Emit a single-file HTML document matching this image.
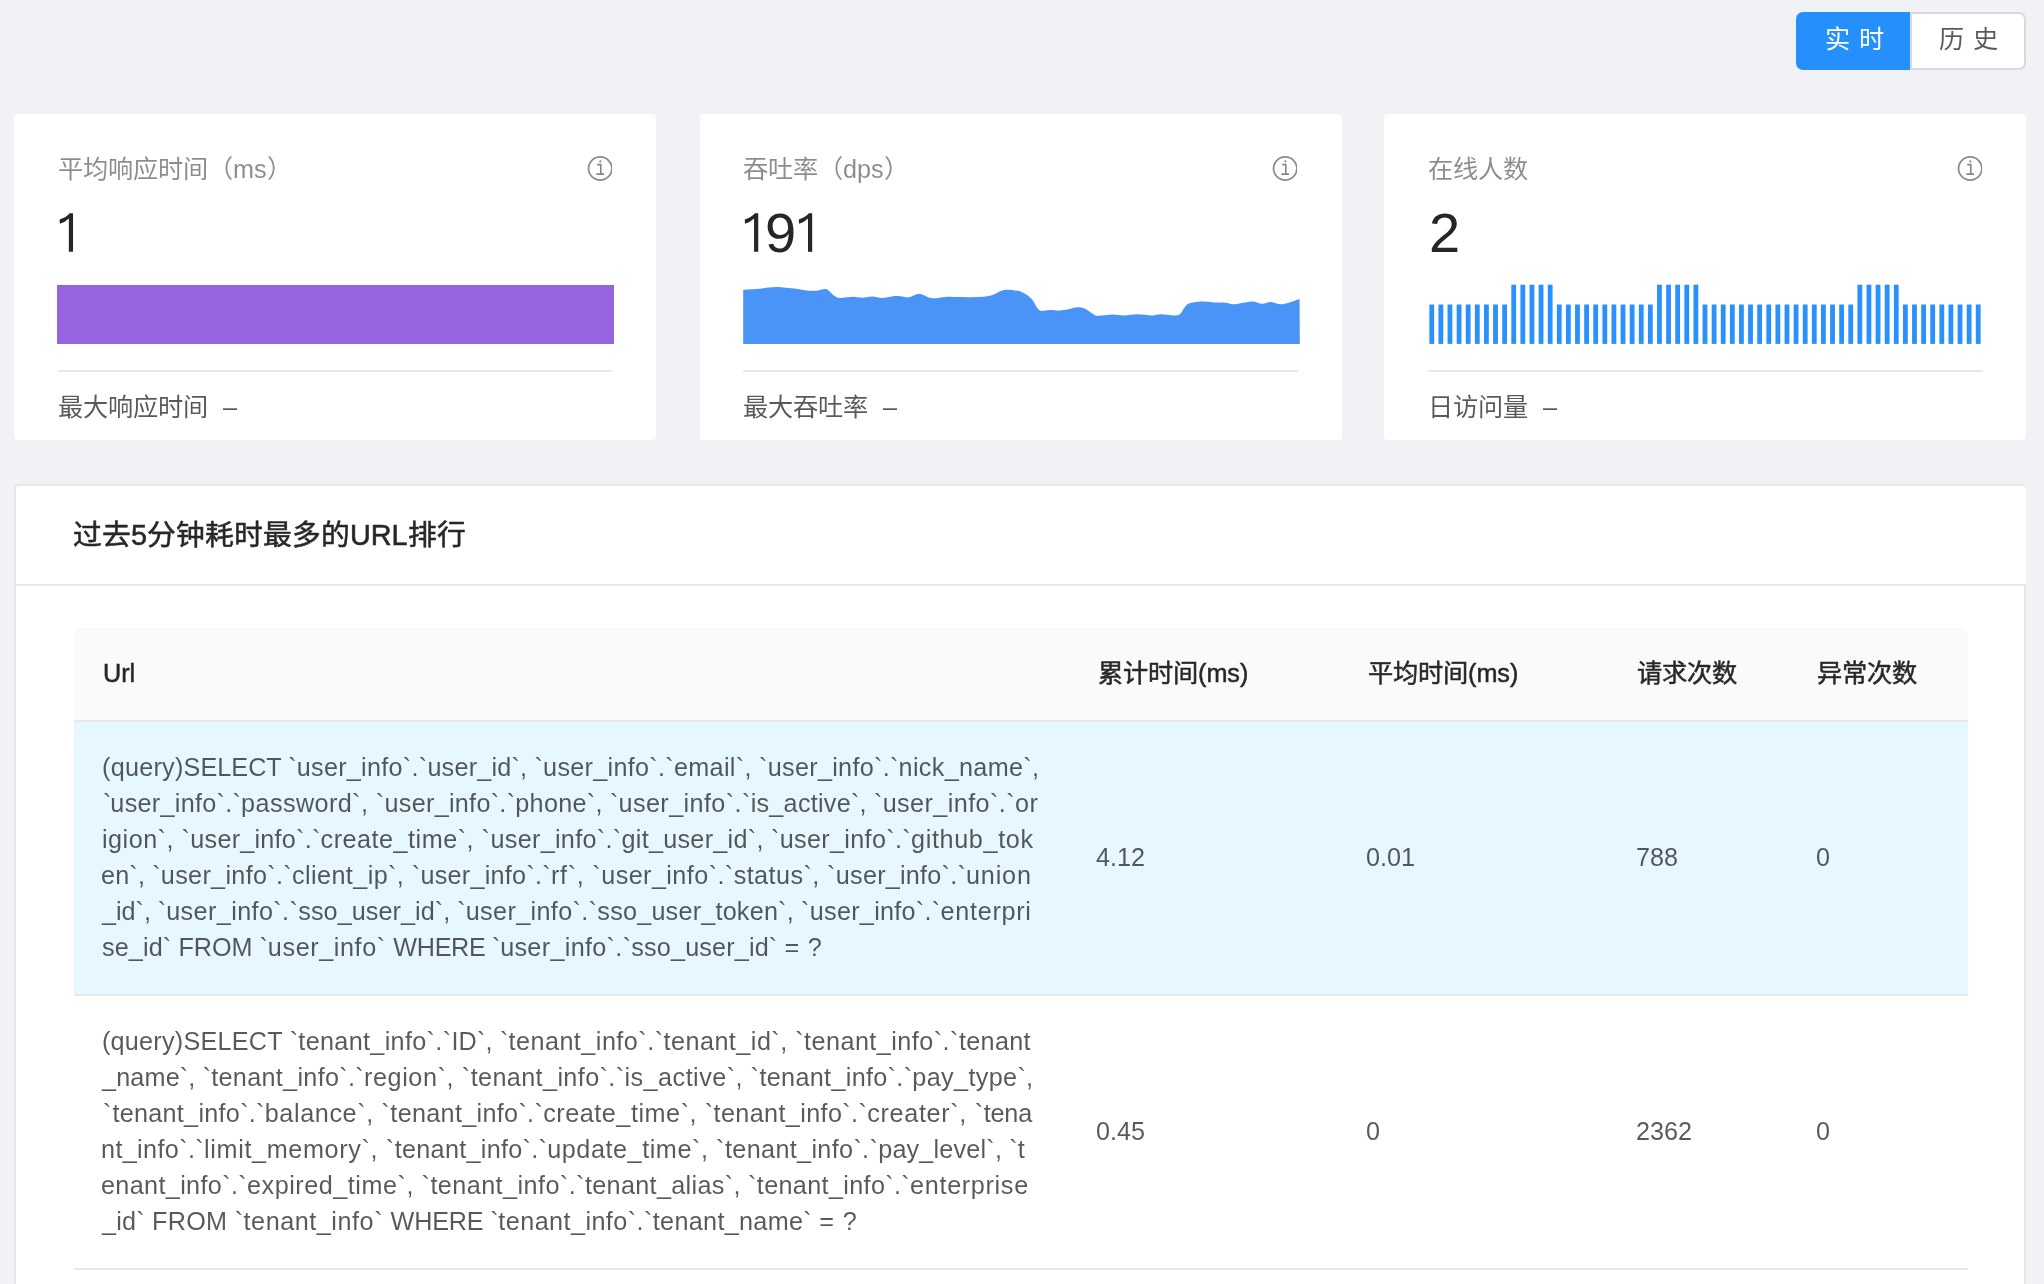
<!DOCTYPE html>
<html lang="zh-CN"><head><meta charset="utf-8"><title>dashboard</title>
<style>
html,body{margin:0;padding:0}
body{width:2044px;height:1284px;overflow:hidden;background:#f0f2f5;position:relative;font-family:"Liberation Sans",sans-serif;color:rgba(0,0,0,.65)}
.abs{position:absolute}
.t{position:absolute;white-space:nowrap;line-height:1;font-size:25.2px;will-change:transform}
.card{position:absolute;background:#fff;border-radius:4px}
.ttl{color:rgba(0,0,0,.45)}
.num{font-size:56px;color:#262626}
.div{position:absolute;height:2px;background:#e8e8e8}
.info{position:absolute;top:154px}
.sql{color:rgba(0,0,0,.65)}
.th{font-weight:500;color:rgba(0,0,0,.85);-webkit-text-stroke:0.5px #262626}
.m{}
svg{display:block}
</style></head><body>

<!-- top-right radio buttons -->
<div class="abs" style="left:1796px;top:12px;width:115px;height:58px;background:#2590fb;border-radius:7px 0 0 7px"></div>
<div class="abs" style="left:1910px;top:12px;width:116px;height:58px;background:#fff;border:2px solid #d9d9d9;box-sizing:border-box;border-radius:0 7px 7px 0"></div>
<div class="t" id="btn1" style="left:1825px;top:27px;color:#fff;word-spacing:2px">实 时</div>
<div class="t" id="btn2" style="left:1939px;top:27px;color:rgba(0,0,0,.65);word-spacing:2px">历 史</div>

<!-- card 1 -->
<div class="card" style="left:14px;top:114px;width:642px;height:326px"></div>
<div class="t ttl" id="c1t" style="left:58px;top:157px">平均响应时间（ms）</div>
<svg class="info" style="left:586px" width="26" height="28" viewBox="0 0 26 28"><circle cx="14.2" cy="14.5" r="11.65" fill="none" stroke="#8a8a8a" stroke-width="1.75"/><path d="M11.2 10.6h3.6v9.4M10.4 20.1h7.6" fill="none" stroke="#858585" stroke-width="1.6"/><circle cx="14.3" cy="7.4" r="1.05" fill="#858585"/></svg>
<div class="abs" style="left:57px;top:285px;width:557px;height:59px;background:#9764e1"></div>
<div class="div" style="left:58px;top:370px;width:554px"></div>
<div class="t" id="c1f" style="left:58px;top:395px">最大响应时间<span style="margin-left:15px">–</span></div>

<!-- card 2 -->
<div class="card" style="left:700px;top:114px;width:642px;height:326px"></div>
<div class="t ttl" id="c2t" style="left:743px;top:157px">吞吐率（dps）</div>
<svg class="info" style="left:1271px" width="26" height="28" viewBox="0 0 26 28"><circle cx="14.2" cy="14.5" r="11.65" fill="none" stroke="#8a8a8a" stroke-width="1.75"/><path d="M11.2 10.6h3.6v9.4M10.4 20.1h7.6" fill="none" stroke="#858585" stroke-width="1.6"/><circle cx="14.3" cy="7.4" r="1.05" fill="#858585"/></svg>
<div class="div" style="left:743px;top:370px;width:555px"></div>
<div class="t" id="c2f" style="left:743px;top:395px">最大吞吐率<span style="margin-left:15px">–</span></div>

<!-- card 3 -->
<div class="card" style="left:1384px;top:114px;width:642px;height:326px"></div>
<div class="t ttl" id="c3t" style="left:1428px;top:157px">在线人数</div>
<svg class="info" style="left:1956px" width="26" height="28" viewBox="0 0 26 28"><circle cx="14.2" cy="14.5" r="11.65" fill="none" stroke="#8a8a8a" stroke-width="1.75"/><path d="M11.2 10.6h3.6v9.4M10.4 20.1h7.6" fill="none" stroke="#858585" stroke-width="1.6"/><circle cx="14.3" cy="7.4" r="1.05" fill="#858585"/></svg>
<div class="div" style="left:1428px;top:370px;width:555px"></div>
<div class="t" id="c3f" style="left:1428px;top:395px">日访问量<span style="margin-left:15px">–</span></div>

<svg class="abs" style="left:0;top:0" width="2044" height="360"><path d="M743.2,289.8C745.9,289.6 755.2,289.2 759.4,288.8C763.6,288.4 765.3,287.9 768.2,287.6C771.1,287.3 774.1,287.0 777.0,287.0C779.9,287.0 782.4,287.5 785.8,287.8C789.2,288.1 793.6,288.4 797.5,288.9C801.4,289.4 805.9,290.4 809.3,290.7C812.7,291.0 815.5,290.8 818.1,290.5C820.7,290.2 823.0,289.1 824.7,289.1C826.4,289.1 826.7,289.2 828.3,290.3C829.9,291.4 832.2,294.4 834.2,295.7C836.2,297.0 836.9,297.7 840.1,297.9C843.3,298.1 849.5,296.7 853.3,296.7C857.1,296.7 859.6,297.8 862.8,297.7C866.0,297.6 869.2,296.3 872.4,296.4C875.6,296.4 878.5,298.0 881.9,298.0C885.3,298.0 889.8,296.6 892.9,296.3C896.0,296.0 897.6,296.1 900.3,296.3C903.0,296.5 906.0,297.7 909.1,297.3C912.2,296.9 915.9,293.8 919.1,293.8C922.3,293.8 925.5,296.5 928.2,297.2C930.9,297.9 932.3,298.3 935.5,298.2C938.7,298.1 943.3,296.9 947.2,296.7C951.1,296.5 953.6,296.9 959.0,297.0C964.4,297.1 973.9,297.3 979.5,297.0C985.1,296.7 989.3,295.9 992.7,295.0C996.1,294.1 997.9,292.2 1000.1,291.3C1002.3,290.4 1003.0,289.8 1005.9,289.7C1008.8,289.6 1014.5,290.1 1017.7,290.8C1020.9,291.5 1022.7,292.4 1025.0,293.8C1027.3,295.2 1029.7,296.8 1031.7,299.1C1033.7,301.4 1035.3,305.4 1036.9,307.4C1038.5,309.3 1039.2,310.4 1041.3,310.8C1043.4,311.2 1046.4,309.9 1049.4,309.9C1052.5,309.8 1056.4,310.6 1059.6,310.5C1062.8,310.4 1065.5,309.8 1068.4,309.3C1071.3,308.8 1074.5,307.4 1077.2,307.3C1079.9,307.2 1082.1,307.6 1084.6,308.6C1087.0,309.6 1089.7,312.1 1091.9,313.3C1094.1,314.5 1094.4,315.6 1097.8,315.8C1101.2,316.0 1108.1,314.6 1112.5,314.5C1116.9,314.4 1120.0,315.4 1124.2,315.4C1128.4,315.4 1132.8,314.3 1137.4,314.3C1142.1,314.3 1148.2,315.5 1152.1,315.5C1156.0,315.5 1157.0,314.3 1160.9,314.3C1164.8,314.3 1172.3,315.7 1175.6,315.5C1178.9,315.3 1179.1,314.8 1180.7,313.3C1182.3,311.8 1183.5,308.4 1185.1,306.7C1186.7,305.0 1187.2,303.8 1190.3,302.9C1193.4,302.0 1199.1,301.4 1203.5,301.4C1207.9,301.3 1213.0,302.4 1216.7,302.6C1220.4,302.8 1222.6,302.4 1225.5,302.7C1228.4,303.0 1229.9,304.4 1234.3,304.2C1238.7,304.0 1247.2,301.5 1251.9,301.4C1256.6,301.3 1259.0,303.7 1262.2,303.8C1265.4,303.9 1267.6,302.0 1271.0,302.1C1274.4,302.2 1277.9,304.8 1282.7,304.3C1287.5,303.8 1296.8,300.0 1299.6,299.1L1299.8,344L743.2,344Z" fill="#4a94f8"/><g fill="#2a90fb"><rect x="1429.35" y="304.5" width="4.8" height="39.4"/><rect x="1438.46" y="304.5" width="4.8" height="39.4"/><rect x="1447.57" y="304.5" width="4.8" height="39.4"/><rect x="1456.68" y="304.5" width="4.8" height="39.4"/><rect x="1465.79" y="304.5" width="4.8" height="39.4"/><rect x="1474.89" y="304.5" width="4.8" height="39.4"/><rect x="1484.00" y="304.5" width="4.8" height="39.4"/><rect x="1493.11" y="304.5" width="4.8" height="39.4"/><rect x="1502.22" y="304.5" width="4.8" height="39.4"/><rect x="1511.33" y="284.7" width="4.8" height="59.2"/><rect x="1520.43" y="284.7" width="4.8" height="59.2"/><rect x="1529.54" y="284.7" width="4.8" height="59.2"/><rect x="1538.65" y="284.7" width="4.8" height="59.2"/><rect x="1547.76" y="284.7" width="4.8" height="59.2"/><rect x="1556.87" y="304.5" width="4.8" height="39.4"/><rect x="1565.97" y="304.5" width="4.8" height="39.4"/><rect x="1575.08" y="304.5" width="4.8" height="39.4"/><rect x="1584.19" y="304.5" width="4.8" height="39.4"/><rect x="1593.30" y="304.5" width="4.8" height="39.4"/><rect x="1602.41" y="304.5" width="4.8" height="39.4"/><rect x="1611.51" y="304.5" width="4.8" height="39.4"/><rect x="1620.62" y="304.5" width="4.8" height="39.4"/><rect x="1629.73" y="304.5" width="4.8" height="39.4"/><rect x="1638.84" y="304.5" width="4.8" height="39.4"/><rect x="1647.95" y="304.5" width="4.8" height="39.4"/><rect x="1657.05" y="284.7" width="4.8" height="59.2"/><rect x="1666.16" y="284.7" width="4.8" height="59.2"/><rect x="1675.27" y="284.7" width="4.8" height="59.2"/><rect x="1684.38" y="284.7" width="4.8" height="59.2"/><rect x="1693.49" y="284.7" width="4.8" height="59.2"/><rect x="1702.59" y="304.5" width="4.8" height="39.4"/><rect x="1711.70" y="304.5" width="4.8" height="39.4"/><rect x="1720.81" y="304.5" width="4.8" height="39.4"/><rect x="1729.92" y="304.5" width="4.8" height="39.4"/><rect x="1739.03" y="304.5" width="4.8" height="39.4"/><rect x="1748.13" y="304.5" width="4.8" height="39.4"/><rect x="1757.24" y="304.5" width="4.8" height="39.4"/><rect x="1766.35" y="304.5" width="4.8" height="39.4"/><rect x="1775.46" y="304.5" width="4.8" height="39.4"/><rect x="1784.57" y="304.5" width="4.8" height="39.4"/><rect x="1793.67" y="304.5" width="4.8" height="39.4"/><rect x="1802.78" y="304.5" width="4.8" height="39.4"/><rect x="1811.89" y="304.5" width="4.8" height="39.4"/><rect x="1821.00" y="304.5" width="4.8" height="39.4"/><rect x="1830.11" y="304.5" width="4.8" height="39.4"/><rect x="1839.21" y="304.5" width="4.8" height="39.4"/><rect x="1848.32" y="304.5" width="4.8" height="39.4"/><rect x="1857.43" y="284.7" width="4.8" height="59.2"/><rect x="1866.54" y="284.7" width="4.8" height="59.2"/><rect x="1875.65" y="284.7" width="4.8" height="59.2"/><rect x="1884.75" y="284.7" width="4.8" height="59.2"/><rect x="1893.86" y="284.7" width="4.8" height="59.2"/><rect x="1902.97" y="304.5" width="4.8" height="39.4"/><rect x="1912.08" y="304.5" width="4.8" height="39.4"/><rect x="1921.19" y="304.5" width="4.8" height="39.4"/><rect x="1930.29" y="304.5" width="4.8" height="39.4"/><rect x="1939.40" y="304.5" width="4.8" height="39.4"/><rect x="1948.51" y="304.5" width="4.8" height="39.4"/><rect x="1957.62" y="304.5" width="4.8" height="39.4"/><rect x="1966.73" y="304.5" width="4.8" height="39.4"/><rect x="1975.83" y="304.5" width="4.8" height="39.4"/></g>
<g fill="#262626"><path d="M4.19,0L0.88,0Q-2.86,4.40 -9.25,6.16L-9.03,10.57Q-3.41,8.82 0,5.28L0,38.53L4.19,38.53Z" transform="translate(68.85,213.25)"/><path d="M4.19,0L0.88,0Q-2.86,4.40 -9.25,6.16L-9.03,10.57Q-3.41,8.82 0,5.28L0,38.53L4.19,38.53Z" transform="translate(754.05,213.25)"/><path d="M4.19,0L0.88,0Q-2.86,4.40 -9.25,6.16L-9.03,10.57Q-3.41,8.82 0,5.28L0,38.53L4.19,38.53Z" transform="translate(808.0,213.25)"/></g></svg>
<div class="t num" id="c2n" style="left:765.1px;top:204.9px">9</div>
<div class="t num" id="c3n" style="left:1428.6px;top:204.9px">2</div>
<!-- table card -->
<div class="abs" style="left:14px;top:484px;width:2012px;height:820px;background:#fff;border:2px solid #e8e8e8;border-right:0;box-sizing:border-box;border-radius:4px"></div>
<div class="abs" style="left:2024px;top:586px;width:2px;height:700px;background:#e8e8e8"></div>
<div class="div" style="left:16px;top:584px;width:2010px"></div>
<div class="t" id="tt" style="left:73px;top:520.8px;font-size:28.8px;font-weight:500;color:rgba(0,0,0,.85);-webkit-text-stroke:0.55px #262626">过去<span class="m">5</span>分钟耗时最多的<span class="m">URL</span>排行</div>

<div class="abs" style="left:74px;top:628px;width:1894px;height:92px;background:#fafafa;border-radius:7px 7px 0 0"></div>
<div class="div" style="left:74px;top:720px;width:1894px"></div>
<div class="abs" style="left:74px;top:722px;width:1894px;height:272px;background:#e6f7ff"></div>
<div class="div" style="left:74px;top:994px;width:1894px"></div>
<div class="div" style="left:74px;top:1268px;width:1894px"></div>

<div class="t th" id="h0" style="left:102.5px;top:661px"><span class="m">Url</span></div>
<div class="t th" id="h1" style="left:1098px;top:661px">累计时间<span class="m">(ms)</span></div>
<div class="t th" id="h2" style="left:1368px;top:661px">平均时间<span class="m">(ms)</span></div>
<div class="t th" id="h3" style="left:1637px;top:661px">请求次数</div>
<div class="t th" id="h4" style="left:1817px;top:661px">异常次数</div>

<div class="t sql" id="a0" style="left:101.79px;top:754.87px"><span style="letter-spacing:0.26px">(query)</span><span style="letter-spacing:0.03px">SELECT `</span><span style="letter-spacing:0.27px">user_info`.`</span><span style="letter-spacing:0.21px">user_id`, `</span><span style="letter-spacing:0.29px">user_info`.`</span><span style="letter-spacing:0.32px">email`, `</span><span style="letter-spacing:0.28px">user_info`.`</span><span style="letter-spacing:0.33px">nick_name`,</span></div>
<div class="t sql" id="a1" style="left:103.04px;top:790.87px"><span style="letter-spacing:-1.05px">`</span><span style="letter-spacing:0.28px">user_info`.`</span><span style="letter-spacing:0.40px">password`, `</span><span style="letter-spacing:0.29px">user_info`.`</span><span style="letter-spacing:0.27px">phone`, `</span><span style="letter-spacing:0.39px">user_info`.`</span><span style="letter-spacing:0.25px">is_active`, `</span><span style="letter-spacing:0.41px">user_info`.`or</span></div>
<div class="t sql" id="a2" style="left:101.86px;top:826.87px"><span style="letter-spacing:0.48px">igion`, `</span><span style="letter-spacing:0.24px">user_info`.`</span><span style="letter-spacing:0.50px">create_time`, `</span><span style="letter-spacing:0.30px">user_info`.`</span><span style="letter-spacing:0.28px">git_user_id`, `</span><span style="letter-spacing:0.33px">user_info`.`</span><span style="letter-spacing:0.64px">github_tok</span></div>
<div class="t sql" id="a3" style="left:101.47px;top:862.87px"><span style="letter-spacing:0.17px">en`, `</span><span style="letter-spacing:0.32px">user_info`.`</span><span style="letter-spacing:0.40px">client_ip`, `</span><span style="letter-spacing:0.26px">user_info`.`</span><span style="letter-spacing:0.69px">rf`, `</span><span style="letter-spacing:0.42px">user_info`.`</span><span style="letter-spacing:0.42px">status`, `</span><span style="letter-spacing:0.23px">user_info`.`</span><span style="letter-spacing:0.82px">union</span></div>
<div class="t sql" id="a4" style="left:102.48px;top:898.87px"><span style="letter-spacing:-0.03px">_id`, `</span><span style="letter-spacing:0.39px">user_info`.`</span><span style="letter-spacing:0.06px">sso_user_id`, `</span><span style="letter-spacing:0.35px">user_info`.`</span><span style="letter-spacing:0.21px">sso_user_token`, `</span><span style="letter-spacing:0.28px">user_info`.`</span><span style="letter-spacing:0.72px">enterpri</span></div>
<div class="t sql" id="a5" style="left:102.34px;top:934.87px"><span style="letter-spacing:0.11px">se_id` </span><span style="letter-spacing:-0.01px">FROM `</span><span style="letter-spacing:0.59px">user_info` </span><span style="letter-spacing:-0.34px">WHERE `</span><span style="letter-spacing:0.32px">user_info`.`</span><span style="letter-spacing:0.15px">sso_user_id` </span><span style="letter-spacing:0.73px">= ?</span></div>
<div class="t" id="v10" style="left:1096px;top:845px">4.12</div>
<div class="t" id="v11" style="left:1366px;top:845px">0.01</div>
<div class="t" id="v12" style="left:1636px;top:845px">788</div>
<div class="t" id="v13" style="left:1816px;top:845px">0</div>

<div class="t sql" id="b0" style="left:101.99px;top:1028.87px"><span style="letter-spacing:0.23px">(query)</span><span style="letter-spacing:0.25px">SELECT `</span><span style="letter-spacing:0.33px">tenant_info`.`</span><span style="letter-spacing:0.19px">ID`, `</span><span style="letter-spacing:0.47px">tenant_info`.`</span><span style="letter-spacing:0.47px">tenant_id`, `</span><span style="letter-spacing:0.46px">tenant_info`.`</span><span style="letter-spacing:0.33px">tenant</span></div>
<div class="t sql" id="b1" style="left:102.48px;top:1064.87px"><span style="letter-spacing:0.16px">_name`, `</span><span style="letter-spacing:0.31px">tenant_info`.`</span><span style="letter-spacing:0.59px">region`, `</span><span style="letter-spacing:0.38px">tenant_info`.`</span><span style="letter-spacing:0.48px">is_active`, `</span><span style="letter-spacing:0.32px">tenant_info`.`</span><span style="letter-spacing:0.35px">pay_type`,</span></div>
<div class="t sql" id="b2" style="left:103.04px;top:1100.87px"><span style="letter-spacing:1.01px">`</span><span style="letter-spacing:0.28px">tenant_info`.`</span><span style="letter-spacing:0.60px">balance`, `</span><span style="letter-spacing:0.31px">tenant_info`.`</span><span style="letter-spacing:0.54px">create_time`, `</span><span style="letter-spacing:0.37px">tenant_info`.`</span><span style="letter-spacing:0.67px">creater`, `</span><span style="letter-spacing:-0.21px">tena</span></div>
<div class="t sql" id="b3" style="left:101.46px;top:1136.87px"><span style="letter-spacing:0.37px">nt_info`.`</span><span style="letter-spacing:0.63px">limit_memory`, `</span><span style="letter-spacing:0.29px">tenant_info`.`</span><span style="letter-spacing:0.56px">update_time`, `</span><span style="letter-spacing:0.34px">tenant_info`.`</span><span style="letter-spacing:0.19px">pay_level`, `t</span></div>
<div class="t sql" id="b4" style="left:101.47px;top:1172.87px"><span style="letter-spacing:0.35px">enant_info`.`</span><span style="letter-spacing:0.53px">expired_time`, `</span><span style="letter-spacing:0.43px">tenant_info`.`</span><span style="letter-spacing:0.33px">tenant_alias`, `</span><span style="letter-spacing:0.35px">tenant_info`.`</span><span style="letter-spacing:0.67px">enterprise</span></div>
<div class="t sql" id="b5" style="left:102.48px;top:1208.87px"><span style="letter-spacing:0.18px">_id` </span><span style="letter-spacing:0.35px">FROM `</span><span style="letter-spacing:0.54px">tenant_info` </span><span style="letter-spacing:-0.20px">WHERE `</span><span style="letter-spacing:0.43px">tenant_info`.`</span><span style="letter-spacing:0.31px">tenant_name` </span><span style="letter-spacing:0.88px">= ?</span></div>
<div class="t" id="v20" style="left:1096px;top:1119px">0.45</div>
<div class="t" id="v21" style="left:1366px;top:1119px">0</div>
<div class="t" id="v22" style="left:1636px;top:1119px">2362</div>
<div class="t" id="v23" style="left:1816px;top:1119px">0</div>

</body></html>
